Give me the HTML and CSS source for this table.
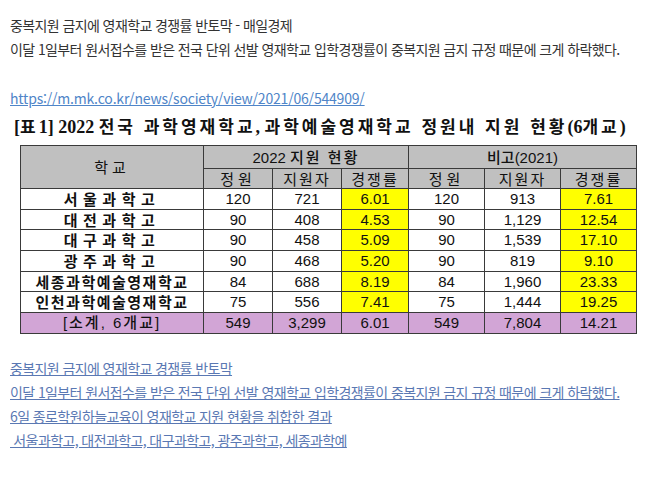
FILE: index.html
```html
<!DOCTYPE html>
<html lang="ko">
<head>
<meta charset="utf-8">
<title>중복지원 금지에 영재학교 경쟁률 반토막</title>
<link rel="stylesheet" href="styles.css">
</head>
<body>
<div class="post">
  <p class="line">중복지원 금지에 영재학교 경쟁률 반토막 - 매일경제</p>
  <p class="line">이달 1일부터 원서접수를 받은 전국 단위 선발 영재학교 입학경쟁률이 중복지원 금지 규정 때문에 크게 하락했다.</p>
  <p class="line blank">&nbsp;</p>
  <p class="line"><a class="url" href="#">https://m.mk.co.kr/news/society/view/2021/06/544909/</a></p>
  <div class="figure">
    <div class="caption"><span class="lat">[</span>표<span class="lat">1] 2022 </span>전국 과학영재학교<span class="lat">, </span>과학예술영재학교 정원내 지원 현황<span class="lat">(6</span>개교<span class="lat">)</span></div>
    <table class="stats">
      <colgroup>
        <col class="c-school"><col class="c-a"><col class="c-a"><col class="c-b"><col class="c-c"><col class="c-c"><col class="c-c">
      </colgroup>
      <thead>
        <tr class="hr1">
          <th rowspan="2" class="ko sp2">학교</th>
          <th colspan="3" class="mix">2022 <span class="ko sp1">지원 현황</span></th>
          <th colspan="3" class="mix"><span class="ko">비고</span>(2021)</th>
        </tr>
        <tr class="hr2">
          <th class="ko sp2">정원</th><th class="ko sp1">지원자</th><th class="ko sp1">경쟁률</th>
          <th class="ko sp2">정원</th><th class="ko sp1">지원자</th><th class="ko sp1">경쟁률</th>
        </tr>
      </thead>
      <tbody>
        <tr><td class="ko name">서울과학고</td><td>120</td><td>721</td><td class="hl">6.01</td><td>120</td><td>913</td><td class="hl">7.61</td></tr>
        <tr><td class="ko name">대전과학고</td><td>90</td><td>408</td><td class="hl">4.53</td><td>90</td><td>1,129</td><td class="hl">12.54</td></tr>
        <tr><td class="ko name">대구과학고</td><td>90</td><td>458</td><td class="hl">5.09</td><td>90</td><td>1,539</td><td class="hl">17.10</td></tr>
        <tr><td class="ko name">광주과학고</td><td>90</td><td>468</td><td class="hl">5.20</td><td>90</td><td>819</td><td class="hl">9.10</td></tr>
        <tr><td class="ko name long">세종과학예술영재학교</td><td>84</td><td>688</td><td class="hl">8.19</td><td>84</td><td>1,960</td><td class="hl">23.33</td></tr>
        <tr><td class="ko name long">인천과학예술영재학교</td><td>75</td><td>556</td><td class="hl">7.41</td><td>75</td><td>1,444</td><td class="hl">19.25</td></tr>
        <tr class="total"><td class="mix">[<span class="ko">소계</span>, 6<span class="ko">개교</span>]</td><td>549</td><td>3,299</td><td>6.01</td><td>549</td><td>7,804</td><td>14.21</td></tr>
      </tbody>
    </table>
  </div>
  <div class="links">
    <p class="line"><a class="ref" href="#">중복지원 금지에 영재학교 경쟁률 반토막</a></p>
    <p class="line"><a class="ref" href="#">이달 1일부터 원서접수를 받은 전국 단위 선발 영재학교 입학경쟁률이 중복지원 금지 규정 때문에 크게 하락했다.</a></p>
    <p class="line"><a class="ref" href="#">6일 종로학원하늘교육이 영재학교 지원 현황을 취합한 결과</a></p>
    <p class="line"><a class="ref" href="#">&nbsp;서울과학고, 대전과학고, 대구과학고, 광주과학고, 세종과학예</a></p>
  </div>
</div>
</body>
</html>
```
FILE: styles.css
```css
html, body {
  margin: 0;
  padding: 0;
  background: #ffffff;
}

body {
  font-family: "Noto Sans CJK KR", "Noto Sans", sans-serif;
  color: #333333;
}

.post {
  padding: 13px 0 0 10px;
}

.line {
  margin: 0;
  height: 24px;
  line-height: 24px;
  font-size: 14px;
  letter-spacing: -0.6px;
  white-space: nowrap;
}

.blank {
  height: 25px;
}

.url {
  color: #4f85c8;
  text-decoration: underline;
  letter-spacing: -0.2px;
}

.figure {
  padding-top: 4px;
}

.caption {
  margin-left: 4px;
  height: 24px;
  line-height: 24px;
  font-size: 17px;
  font-weight: 700;
  color: #111111;
  letter-spacing: 3px;
  white-space: nowrap;
}

.caption .lat {
  font-family: "Liberation Serif", serif;
  font-size: 18px;
  letter-spacing: 0;
}

.stats {
  margin: 7px 0 0 10px;
  border-collapse: collapse;
  table-layout: fixed;
  width: 616px;
  border: 1px solid #222222;
  font-family: "Liberation Sans", Arial, sans-serif;
  font-size: 15px;
  color: #111111;
}

.c-school { width: 183px; }
.c-a { width: 69px; }
.c-b { width: 67px; }
.c-c { width: 76px; }

.stats th,
.stats td {
  border: 1px solid #3a3a3a;
  padding: 0;
  text-align: center;
  vertical-align: middle;
  white-space: nowrap;
  line-height: 18px;
}

.stats th {
  background: #c0c0c0;
  font-weight: 400;
}

.hr1 th { height: 22px; }
.hr2 th { height: 19px; }
.stats tbody td { height: 19.7px; }

.ko {
  font-family: "Noto Sans CJK KR", sans-serif;
  font-weight: 500;
}

.sp1 { letter-spacing: 2px; }
.sp2 { letter-spacing: 4px; }

.name {
  letter-spacing: 5.5px;
  font-weight: 700;
}

.name.long {
  letter-spacing: 1.5px;
}

.hl {
  background: #ffff00;
}

.total td {
  background: #d2a5d6;
}

.total .mix {
  letter-spacing: 2px;
}

.links {
  padding-top: 22px;
}

.ref {
  color: #5a78b3;
  text-decoration: underline;
}
```
